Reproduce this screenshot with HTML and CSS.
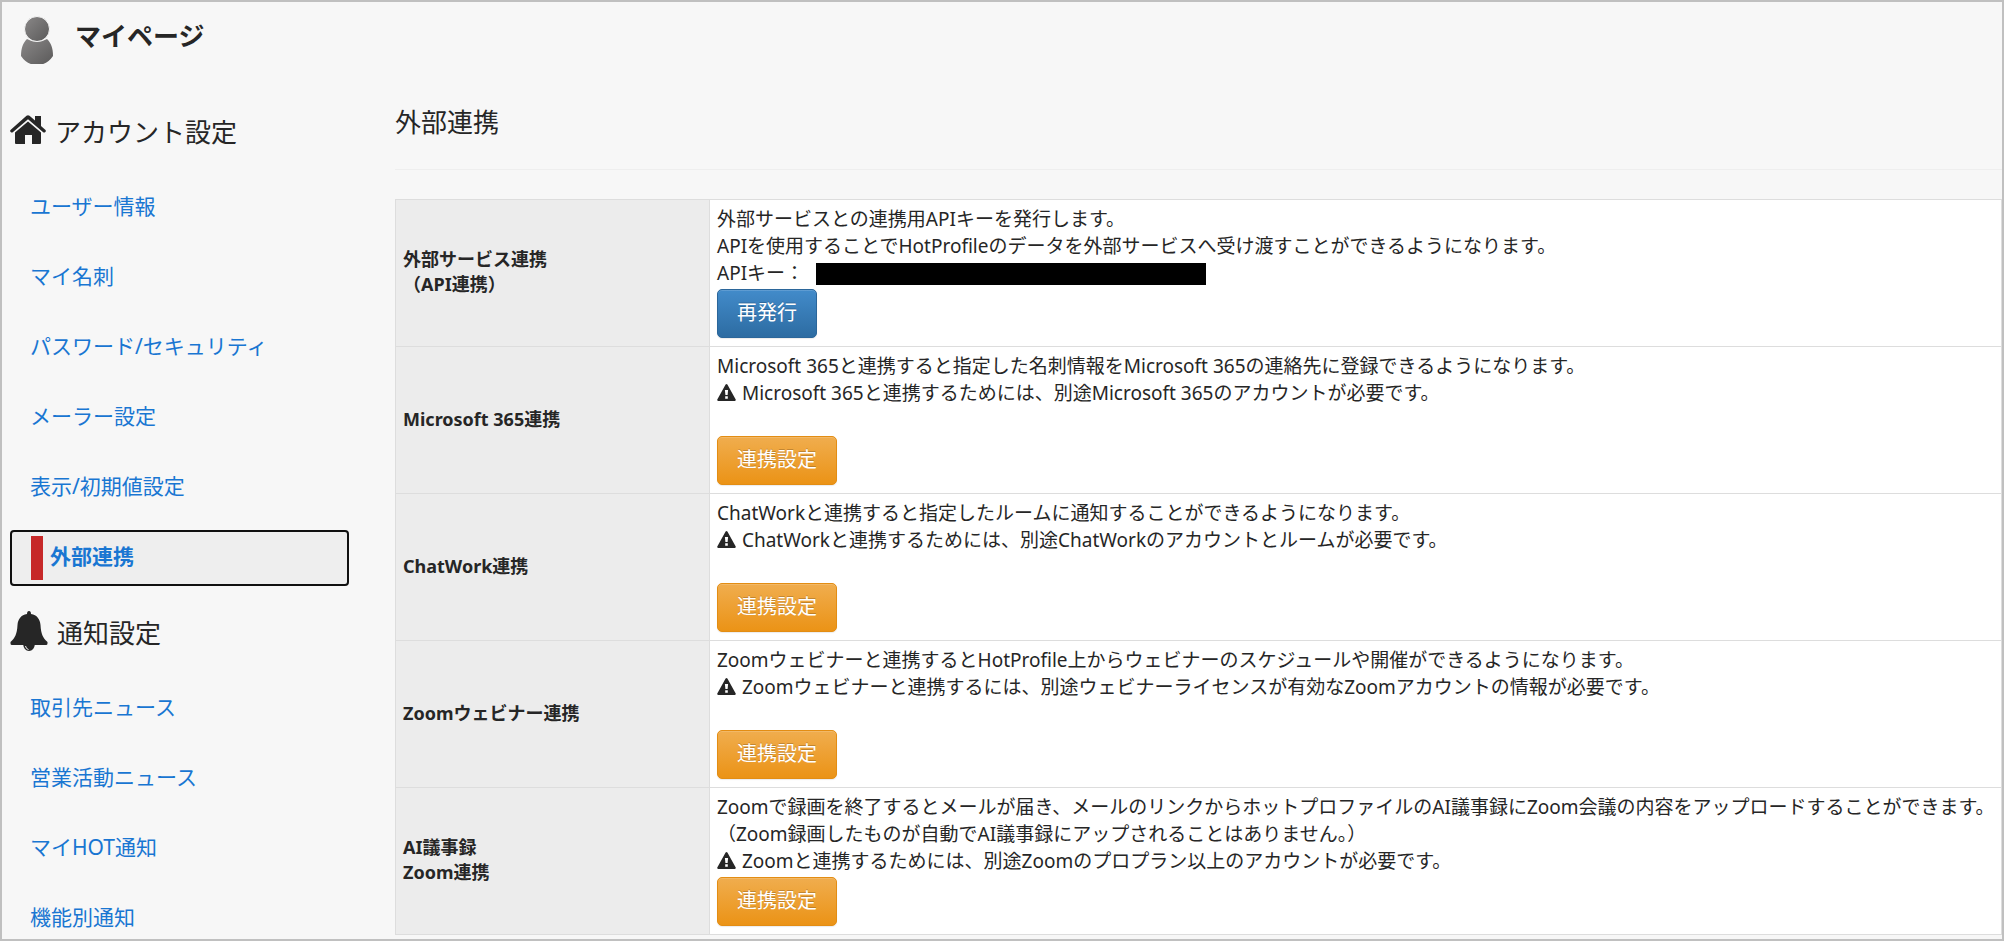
FILE: index.html
```html
<!DOCTYPE html>
<html lang="ja">
<head>
    <meta charset="UTF-8">
    <meta name="viewport" content="width=device-width, initial-scale=1.0">
    <title>マイページ - 外部連携</title>
    <link rel="stylesheet" href="styles.css">
</head>
<body>
    <!-- shared icon shapes -->
    <svg class="sprite" aria-hidden="true">
        <symbol id="icon-warning" viewBox="0 0 19 17">
            <path fill-rule="evenodd" d="M8.6.6q.9-1.2 1.8 0l8.3 14.8q.6 1.4-.9 1.6H1.2q-1.5-.2-.9-1.6zM7.9 6l.5 5h2.2l.5-5zM8.2 12.3v2.4h2.6v-2.4z"/>
        </symbol>
    </svg>

    <header class="page-header">
        <svg class="icon-user" viewBox="0 0 34 50" aria-hidden="true">
            <defs>
                <linearGradient id="user-fill" x1="0" y1="0" x2="1" y2="1">
                    <stop offset="0" stop-color="#8a8888"/>
                    <stop offset="1" stop-color="#5a5959"/>
                </linearGradient>
            </defs>
            <path fill="url(#user-fill)" d="M7 25q10 6 20 0c4 4 6 9 6 17q-6 9-16 9T1 42c0-8 2-13 6-17z"/>
            <circle cx="17" cy="15" r="12.5" fill="url(#user-fill)" stroke="#f7f7f7"/>
        </svg>
        <h1>マイページ</h1>
    </header>

    <div class="layout">
        <nav class="sidebar">
            <h2 class="nav-title">
                <svg class="icon-home" viewBox="0 0 36 30" aria-hidden="true">
                    <path d="M16.500.8q1.500-1.300 3 0L25 5.500V1h6v10l4.500 4q.8 1-.2 2t-2.100.2L18 4.300 2.800 17.200q-1.100.8-2.100-.2t-.2-2z"/>
                    <path d="M18 6.500 31 17.500V28q0 1-1 1h-8v-9h-7v9H6q-1 0-1-1V17.500z"/>
                </svg>
                アカウント設定
            </h2>
            <ul>
                <li><a href="#">ユーザー情報</a></li>
                <li><a href="#">マイ名刺</a></li>
                <li><a href="#">パスワード/セキュリティ</a></li>
                <li><a href="#">メーラー設定</a></li>
                <li><a href="#">表示/初期値設定</a></li>
                <li><a href="#" class="active" aria-current="page">外部連携</a></li>
            </ul>
            <h2 class="nav-title">
                <svg class="icon-bell" viewBox="0 0 38 40" aria-hidden="true">
                    <path d="M19 0q2 0 2 3c6 1 9 5 9.500 11 .5 9 2.500 13 7 17v1.500q0 1.500-1.500 1.500H2Q.5 34 .5 32.500V31c4.500-4 6.500-8 7-17C8 8 11 4 17 3q0-3 2-3z"/>
                    <path d="M13 33h12q-1 7-6 7t-6-7z"/>
                    <path d="M15.500 35q.5 3 3 3.500" fill="none" stroke="#f7f7f7"/>
                </svg>
                通知設定
            </h2>
            <ul>
                <li><a href="#">取引先ニュース</a></li>
                <li><a href="#">営業活動ニュース</a></li>
                <li><a href="#">マイHOT通知</a></li>
                <li><a href="#">機能別通知</a></li>
            </ul>
        </nav>

        <main>
            <h2 class="main-title">外部連携</h2>
            <table>
                <tr>
                    <th scope="row">外部サービス連携<br>（API連携）</th>
                    <td>
                        <div class="description">
                            <p>外部サービスとの連携用APIキーを発行します。</p>
                            <p>APIを使用することでHotProfileのデータを外部サービスへ受け渡すことができるようになります。</p>
                            <p class="api-key">APIキー： <span class="masked"></span></p>
                        </div>
                        <button type="button" class="btn btn-primary">再発行</button>
                    </td>
                </tr>
                <tr>
                    <th scope="row">Microsoft 365連携</th>
                    <td>
                        <div class="description">
                            <p>Microsoft 365と連携すると指定した名刺情報をMicrosoft 365の連絡先に登録できるようになります。</p>
                            <p><svg class="icon-warning"><use href="#icon-warning"/></svg> Microsoft 365と連携するためには、別途Microsoft 365のアカウントが必要です。</p>
                        </div>
                        <button type="button" class="btn btn-warning">連携設定</button>
                    </td>
                </tr>
                <tr>
                    <th scope="row">ChatWork連携</th>
                    <td>
                        <div class="description">
                            <p>ChatWorkと連携すると指定したルームに通知することができるようになります。</p>
                            <p><svg class="icon-warning"><use href="#icon-warning"/></svg> ChatWorkと連携するためには、別途ChatWorkのアカウントとルームが必要です。</p>
                        </div>
                        <button type="button" class="btn btn-warning">連携設定</button>
                    </td>
                </tr>
                <tr>
                    <th scope="row">Zoomウェビナー連携</th>
                    <td>
                        <div class="description">
                            <p>Zoomウェビナーと連携するとHotProfile上からウェビナーのスケジュールや開催ができるようになります。</p>
                            <p><svg class="icon-warning"><use href="#icon-warning"/></svg> Zoomウェビナーと連携するには、別途ウェビナーライセンスが有効なZoomアカウントの情報が必要です。</p>
                        </div>
                        <button type="button" class="btn btn-warning">連携設定</button>
                    </td>
                </tr>
                <tr>
                    <th scope="row">AI議事録<br>Zoom連携</th>
                    <td>
                        <div class="description">
                            <p>Zoomで録画を終了するとメールが届き、メールのリンクからホットプロファイルのAI議事録にZoom会議の内容をアップロードすることができます。</p>
                            <p>（Zoom録画したものが自動でAI議事録にアップされることはありません。）</p>
                            <p><svg class="icon-warning"><use href="#icon-warning"/></svg> Zoomと連携するためには、別途Zoomのプロプラン以上のアカウントが必要です。</p>
                        </div>
                        <button type="button" class="btn btn-warning">連携設定</button>
                    </td>
                </tr>
            </table>
        </main>
    </div>
</body>
</html>
```
FILE: styles.css
```css
:root {
    --color-text: #262626;
    --color-link: #1976d2;
    --color-line: #dddddd;
    --color-bg: #f7f7f7;
}

* {
    margin: 0;
    padding: 0;
    box-sizing: border-box;
}

html {
    height: 100%;
    overflow: hidden;
}

body {
    height: 100%;
    overflow: hidden;
    border: 2px solid #c0c0c0;
    background: var(--color-bg);
    color: var(--color-text);
    font-family: "Noto Sans", "Noto Sans CJK JP", sans-serif;
    font-size: 19px;
    line-height: 27px;
}

svg {
    fill: currentColor;
}

.sprite {
    display: none;
}

.page-header {
    display: flex;
    align-items: flex-start;
    gap: 21px;
    height: 83px;
    padding: 12px 18px;
}

.page-header h1 {
    font-size: 26px;
    line-height: 44px;
}

.icon-user {
    width: 34px;
    height: 50px;
}

.layout {
    display: grid;
    grid-template-columns: 339px minmax(0, 1fr);
    column-gap: 46px;
    padding-left: 8px;
}

.nav-title {
    display: flex;
    align-items: center;
    gap: 9px;
    height: 95px;
    font-size: 26px;
    font-weight: 400;
}

.nav-title svg {
    margin-bottom: 5px;
}

.icon-home {
    width: 36px;
    height: 30px;
}

.icon-bell {
    width: 38px;
    height: 40px;
}

.sidebar ul {
    display: flex;
    flex-direction: column;
    gap: 14px;
    list-style: none;
}

.sidebar a {
    display: flex;
    height: 56px;
    padding: 6px 20px;
    color: var(--color-link);
    font-size: 21px;
    line-height: 40px;
    text-decoration: none;
}

.sidebar a:hover {
    text-decoration: underline;
}

.sidebar .active {
    padding: 4px 19px;
    border: 2px solid #101010;
    border-radius: 4px;
    background: #eeeeee;
    font-weight: 700;
}

.sidebar .active::before {
    content: '';
    width: 12px;
    height: 44px;
    margin-right: 7px;
    background: #c62828;
}

.main-title {
    height: 85px;
    margin-bottom: 29px;
    padding-top: 17px;
    border-bottom: 1px solid #eeeeee;
    font-size: 26px;
    font-weight: 400;
    line-height: 40px;
}

table {
    width: 100%;
    border-collapse: collapse;
}

th,
td {
    padding: 6px 4px 8px 7px;
    border: 1px solid var(--color-line);
    text-align: left;
    vertical-align: middle;
}

th {
    width: 314px;
    background: #ececec;
    font-size: 18px;
    line-height: 25px;
}

td {
    background: #ffffff;
}

.description {
    min-height: 83px;
}

.api-key {
    display: flex;
    align-items: center;
}

.masked {
    width: 390px;
    height: 22px;
    margin-left: 12px;
    background: #000000;
}

.icon-warning {
    width: 19px;
    height: 17px;
    margin-right: 1px;
    vertical-align: -1px;
}

.btn {
    display: block;
    height: 49px;
    padding: 0 19px 4px;
    border: 1px solid;
    border-radius: 5px;
    box-shadow: inset 0 1px 0 rgba(255, 255, 255, 0.15), 0 1px 1px rgba(0, 0, 0, 0.08);
    color: #ffffff;
    font-family: inherit;
    font-size: 20px;
    text-shadow: 0 -1px 0 rgba(0, 0, 0, 0.2);
    cursor: pointer;
}

.btn-primary {
    border-color: #2b669a;
    background: linear-gradient(to bottom, #428bca, #2d6ca2);
}

.btn-warning {
    border-color: #e38d13;
    background: linear-gradient(to bottom, #f0ad4e, #eb9316);
}
```
